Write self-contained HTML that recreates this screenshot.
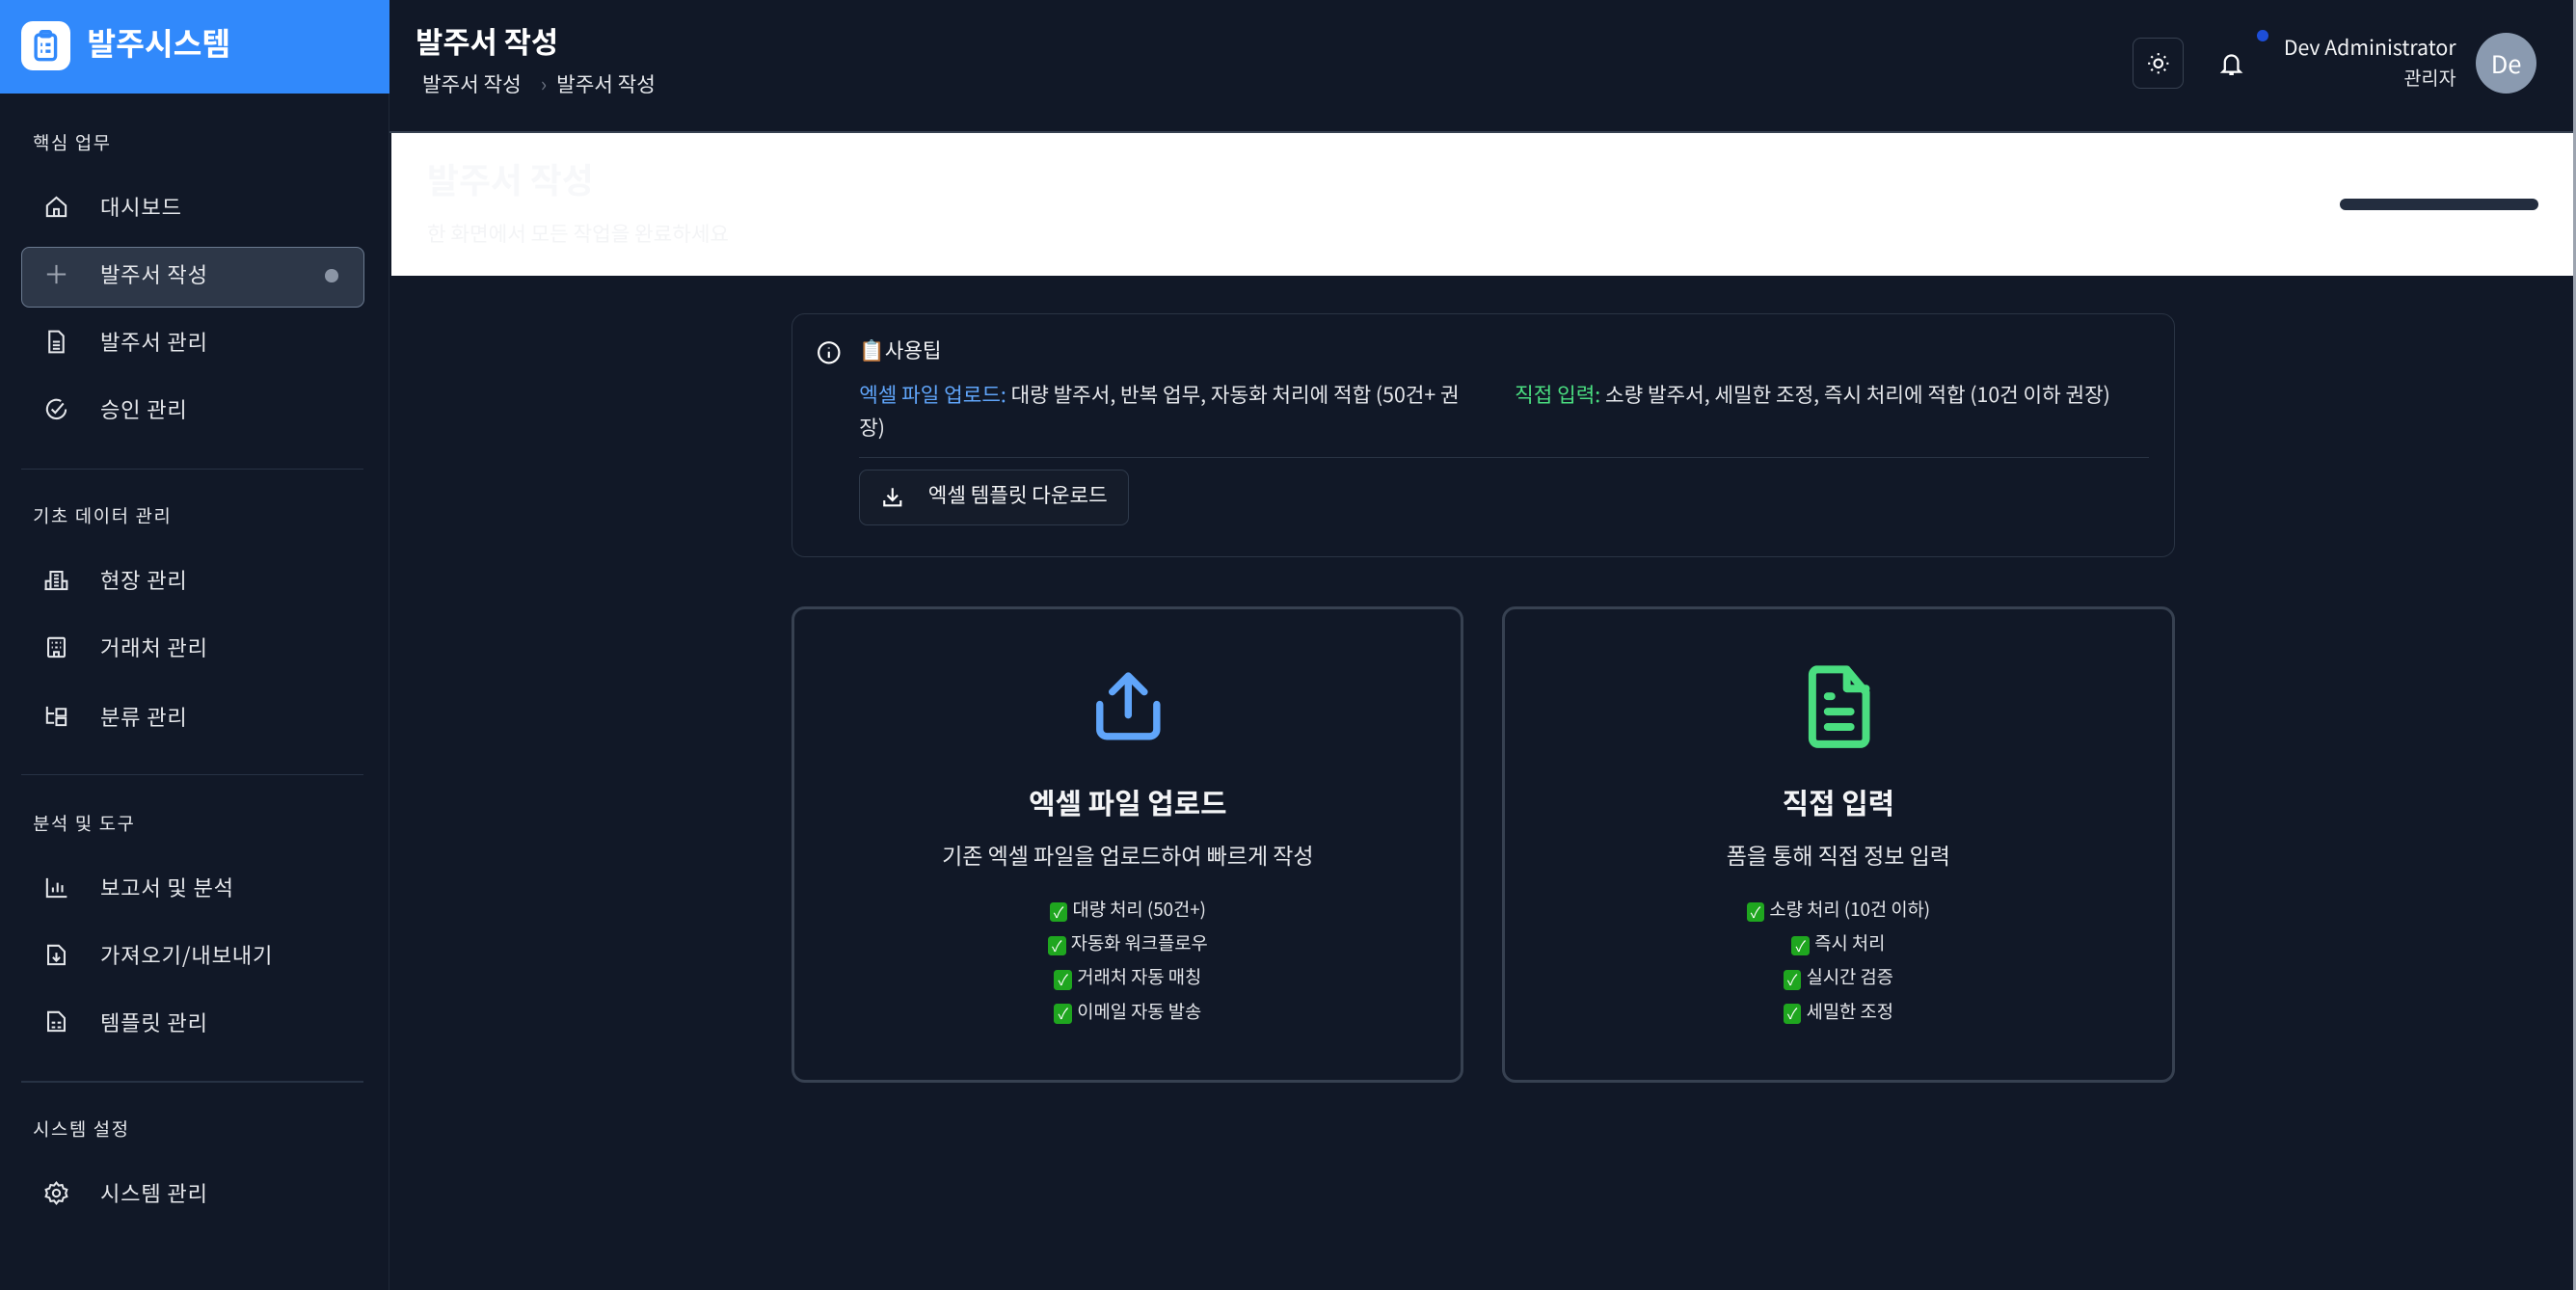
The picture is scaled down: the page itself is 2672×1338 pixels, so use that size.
<!DOCTYPE html>
<html><head><meta charset="utf-8"><style>
*{box-sizing:border-box;margin:0;padding:0}
html,body{width:2672px;height:1338px;overflow:hidden;background:#111827}
#r{zoom:1.70408;width:1568px;height:785px;position:relative;font-family:"Noto Sans CJK KR","Liberation Sans",sans-serif;color:#e5e7eb}
.a{position:absolute}
.sb{left:0;top:0;width:237px;height:785px;border-right:1px solid #1f2937;background:#111827}
.logo{left:0;top:0;width:237px;height:57px;background:#3189fb}
.sec{left:20px;font-size:11px;color:#e5e7eb;letter-spacing:1px;line-height:14px}
.it{left:26px;font-size:13px;color:#e5e7eb;letter-spacing:.5px;display:flex;align-items:center;line-height:18px}
.it svg{width:17px;height:17px;margin-right:18px}
.dv{left:13px;width:208px;height:1px;background:#273244}
.ok{display:inline-block;width:11px;height:12px;background:#1fa61f;border-radius:2px;color:#fff;font-size:9px;line-height:12px;text-align:center;margin-right:3px;vertical-align:-1px}
.card{border:2px solid #374151;border-radius:8px;text-align:center;top:369px;height:290px}
.card h3{font-size:17.5px;font-weight:bold;color:#f3f4f6;margin-top:104px;line-height:26px}
.card p{font-size:13.5px;color:#e5e7eb;margin-top:9px;line-height:20px}
.card ul{list-style:none;font-size:11px;color:#e5e7eb;margin-top:13px;line-height:20.7px}
</style></head><body><div id="r">
<div class="a sb"></div>
<div class="a logo"></div>
<div class="a" style="left:13px;top:13px;width:30px;height:30px;background:#fff;border-radius:7px"></div>
<svg class="a" style="left:19px;top:18px" width="18" height="20" viewBox="0 0 18 20" fill="none" stroke="#3189fb" stroke-width="2"><rect x="3" y="3" width="12" height="15" rx="2"/><rect x="6" y="1" width="6" height="3" rx="1"/><path d="M6 9h1M9 9h3M6 13h1M9 13h3"/></svg>
<div class="a" style="left:53px;top:12px;font-size:19px;font-weight:bold;color:#fff;line-height:28px">발주시스템</div>

<div class="a sec" style="top:80px">핵심 업무</div>
<div class="a it" style="top:117px"><svg viewBox="0 0 24 24" fill="none" stroke="#e5e7eb" stroke-width="1.7"><path d="M4 11l8-7 8 7v9H4z M10 20v-6h4v6"/></svg>대시보드</div>
<div class="a" style="left:13px;top:150px;width:209px;height:37px;background:#2d3748;border:1px solid #6b7a90;border-radius:5px"></div>
<div class="a it" style="top:158px"><svg viewBox="0 0 24 24" fill="none" stroke="#9ca3af" stroke-width="1.7"><path d="M12 4v16M4 12h16"/></svg>발주서 작성</div>
<div class="a" style="left:198px;top:164px;width:8px;height:8px;border-radius:50%;background:#8b95a5"></div>
<div class="a it" style="top:199px"><svg viewBox="0 0 24 24" fill="none" stroke="#e5e7eb" stroke-width="1.7"><path d="M6 3h8l4 4v14H6z M9 12h6M9 15h6M9 18h6"/></svg>발주서 관리</div>
<div class="a it" style="top:240px"><svg viewBox="0 0 24 24" fill="none" stroke="#e5e7eb" stroke-width="1.7"><path d="M20 12a8 8 0 1 1-4-7M8 12l3 3 7-8"/></svg>승인 관리</div>
<div class="a dv" style="top:285px"></div>
<div class="a sec" style="top:307px">기초 데이터 관리</div>
<div class="a it" style="top:344px"><svg viewBox="0 0 24 24" fill="none" stroke="#e5e7eb" stroke-width="1.7"><path d="M7 20V5h10v15M3 20v-7h4M17 13h4v7H2M10 8h4M10 11h4M10 14h4M10 17h4"/></svg>현장 관리</div>
<div class="a it" style="top:385px"><svg viewBox="0 0 24 24" fill="none" stroke="#e5e7eb" stroke-width="1.7"><rect x="5" y="4" width="14" height="16" rx="1"/><path d="M8 8h1M11 8h2M15 8h1M8 12h1M11 12h2M15 12h1M10 20v-4h4v4"/></svg>거래처 관리</div>
<div class="a it" style="top:427px"><svg viewBox="0 0 24 24" fill="none" stroke="#e5e7eb" stroke-width="1.7"><path d="M4 4v14h6M4 10h6M12 6h8v6h-8zM12 14h8v6h-8z"/></svg>분류 관리</div>
<div class="a dv" style="top:471px"></div>
<div class="a sec" style="top:494px">분석 및 도구</div>
<div class="a it" style="top:531px"><svg viewBox="0 0 24 24" fill="none" stroke="#e5e7eb" stroke-width="1.7"><path d="M4 4v16h17M9 16v-4M13 16V8M17 16v-6"/></svg>보고서 및 분석</div>
<div class="a it" style="top:572px"><svg viewBox="0 0 24 24" fill="none" stroke="#e5e7eb" stroke-width="1.7"><path d="M5 4h9l5 5v11H5z M12 10v7M9 14l3 3 3-3"/></svg>가져오기/내보내기</div>
<div class="a it" style="top:613px"><svg viewBox="0 0 24 24" fill="none" stroke="#e5e7eb" stroke-width="1.7"><path d="M5 4h9l5 5v11H5z M8 13h3M13 13h3M8 17h3M13 17h3"/></svg>템플릿 관리</div>
<div class="a dv" style="top:658px"></div>
<div class="a sec" style="top:680px">시스템 설정</div>
<div class="a it" style="top:717px"><svg viewBox="0 0 24 24" fill="none" stroke="#e5e7eb" stroke-width="1.7"><circle cx="12" cy="12" r="3"/><path d="M12 3l2 2.5 3-.5 1 3 3 1-1 3 1 3-3 1-1 3-3-.5L12 21l-2-2.5-3 .5-1-3-3-1 1-3-1-3 3-1 1-3 3 .5z"/></svg>시스템 관리</div>

<div class="a" style="left:253px;top:11px;font-size:18px;font-weight:bold;color:#fff;line-height:27px">발주서 작성</div>
<div class="a" style="left:257px;top:42px;font-size:12.5px;color:#e5e7eb;line-height:18px">발주서 작성 <span style="color:#6b7280;margin:0 3px 0 9px">›</span> 발주서 작성</div>
<div class="a" style="left:1298px;top:23px;width:31px;height:31px;border:1px solid #374151;border-radius:5px"></div>
<svg class="a" style="left:1306px;top:31px" width="15" height="15" viewBox="0 0 24 24" fill="none" stroke="#fff" stroke-width="2"><circle cx="12" cy="12" r="4"/><path d="M12 2v2M12 20v2M2 12h2M20 12h2M5 5l1.5 1.5M17.5 17.5L19 19M5 19l1.5-1.5M17.5 6.5L19 5"/></svg>
<svg class="a" style="left:1350px;top:31px" width="16" height="16" viewBox="0 0 24 24" fill="none" stroke="#fff" stroke-width="2"><path d="M6 17V10a6 6 0 0 1 12 0v7l2 2H4zM10 21h4"/></svg>
<div class="a" style="left:1374px;top:18px;width:7px;height:7px;border-radius:50%;background:#1d4ed8"></div>
<div class="a" style="left:1380px;top:20px;width:115px;text-align:right;font-size:12.5px;color:#f3f4f6;line-height:18px">Dev Administrator</div>
<div class="a" style="left:1380px;top:39px;width:115px;text-align:right;font-size:11.5px;color:#e5e7eb;line-height:17px">관리자</div>
<div class="a" style="left:1507px;top:20px;width:37px;height:37px;border-radius:50%;background:#8a9ab0;color:#fff;font-size:15px;text-align:center;line-height:37px">De</div>
<div class="a" style="left:237px;top:80px;width:1331px;height:1px;background:#374151"></div>

<div class="a" style="left:238px;top:81px;width:1328px;height:87px;background:#fff"></div>
<div class="a" style="left:260px;top:94px;font-size:21px;font-weight:bold;color:#f7f8fa;line-height:30px">발주서 작성</div>
<div class="a" style="left:260px;top:133px;font-size:12.5px;color:#f3f4f6;line-height:18px">한 화면에서 모든 작업을 완료하세요</div>
<div class="a" style="left:1424px;top:121px;width:121px;height:7px;border-radius:4px;background:#232d3f"></div>
<div class="a" style="left:1566px;top:0;width:2px;height:785px;background:#9ca3af"></div>

<div class="a" style="left:482px;top:191px;width:842px;height:148px;border:1px solid #2a3444;border-radius:8px"></div>
<svg class="a" style="left:497px;top:207px" width="15" height="15" viewBox="0 0 24 24" fill="none" stroke="#fff" stroke-width="2"><circle cx="12" cy="12" r="10"/><path d="M12 11v6M12 7v1"/></svg>
<div class="a" style="left:523px;top:204px;font-size:12.5px;color:#f3f4f6;line-height:18px">📋사용팁</div>
<div class="a" style="left:523px;top:230px;width:375px;font-size:12.5px;line-height:20px;color:#e5e7eb"><span style="color:#60a5fa">엑셀 파일 업로드:</span> 대량 발주서, 반복 업무, 자동화 처리에 적합 (50건+ 권장)</div>
<div class="a" style="left:922px;top:230px;font-size:12.5px;line-height:20px;color:#e5e7eb"><span style="color:#4ade80">직접 입력:</span> 소량 발주서, 세밀한 조정, 즉시 처리에 적합 (10건 이하 권장)</div>
<div class="a" style="left:523px;top:278px;width:785px;height:1px;background:#2a3444"></div>
<div class="a" style="left:523px;top:286px;width:164px;height:34px;border:1px solid #2f3a4b;border-radius:5px;background:#151c2a"></div>
<svg class="a" style="left:536px;top:295px" width="15" height="15" viewBox="0 0 24 24" fill="none" stroke="#fff" stroke-width="2"><path d="M12 3v12M7 10l5 5 5-5M4 15v5h16v-5"/></svg>
<div class="a" style="left:565px;top:292px;font-size:12.5px;color:#f3f4f6;line-height:18px">엑셀 템플릿 다운로드</div>

<div class="a card" style="left:482px;width:409px">
<svg class="a" style="left:177px;top:34px" width="52" height="52" viewBox="0 0 24 24" fill="none" stroke="#60a5fa" stroke-width="2" stroke-linecap="round" stroke-linejoin="round"><path d="M12 3v11M7.5 7.5L12 3l4.5 4.5M4 11v7a2 2 0 0 0 2 2h12a2 2 0 0 0 2-2v-7"/></svg>
<h3>엑셀 파일 업로드</h3><p>기존 엑셀 파일을 업로드하여 빠르게 작성</p>
<ul><li><span class="ok">✓</span>대량 처리 (50건+)</li><li><span class="ok">✓</span>자동화 워크플로우</li><li><span class="ok">✓</span>거래처 자동 매칭</li><li><span class="ok">✓</span>이메일 자동 발송</li></ul></div>
<div class="a card" style="left:914px;width:410px">
<svg class="a" style="left:176px;top:30px" width="56" height="60" viewBox="0 0 24 24" fill="none" stroke="#4ade80" stroke-width="2" stroke-linecap="round" stroke-linejoin="round"><path d="M6 2h8l5 6v12a1.5 1.5 0 0 1-1.5 1.5h-11A1.5 1.5 0 0 1 5 20V3.5A1.5 1.5 0 0 1 6 2zM14 2v5h5M9 9h1M9 13h6M9 17h6"/></svg>
<h3>직접 입력</h3><p>폼을 통해 직접 정보 입력</p>
<ul><li><span class="ok">✓</span>소량 처리 (10건 이하)</li><li><span class="ok">✓</span>즉시 처리</li><li><span class="ok">✓</span>실시간 검증</li><li><span class="ok">✓</span>세밀한 조정</li></ul></div>
</div></body></html>
